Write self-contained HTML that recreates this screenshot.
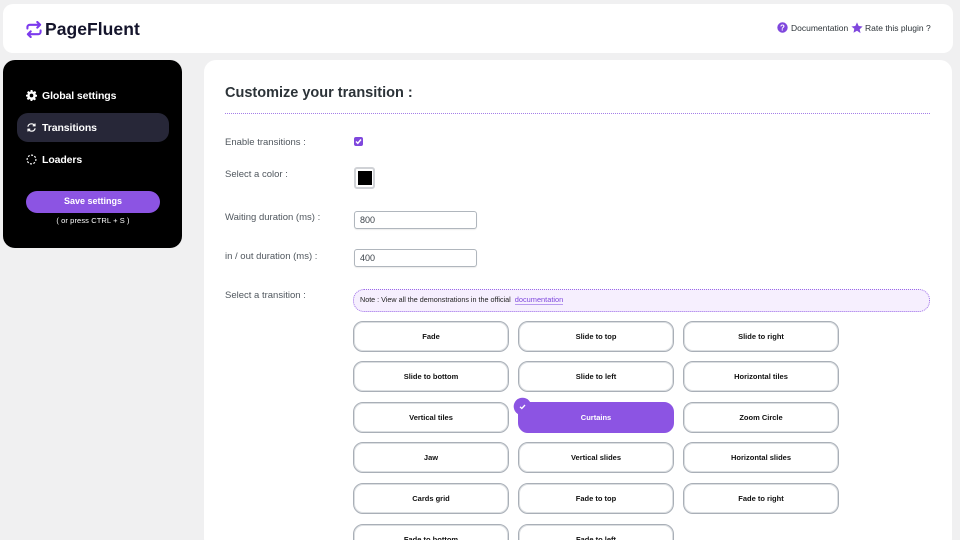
<!DOCTYPE html>
<html lang="en">
<head>
<meta charset="utf-8">
<title>PageFluent</title>
<style>
html,body{margin:0;padding:0;width:960px;height:540px;overflow:hidden;background:#f0f0f1;font-family:"Liberation Sans",sans-serif;color:#3c434a}
#wrap{position:relative;width:960px;height:540px;overflow:hidden}
.a{position:absolute;white-space:nowrap}
#top{position:absolute;left:3px;top:4px;width:950px;height:49px;background:#fff;border-radius:10px}
#side{position:absolute;left:3px;top:60px;width:179px;height:188px;background:#000;border-radius:12px}
#main{position:absolute;left:204px;top:60px;width:748px;height:490px;background:#fff;border-radius:12px}
.lbl{font-size:9.5px;color:#50575e;letter-spacing:0;left:225px;line-height:12px}
.nav{font-size:10.5px;font-weight:bold;color:#fff;left:42px;line-height:12px;letter-spacing:-.1px}
.inp{position:absolute;left:354px;width:116px;height:16px;border:1px solid #b0b6bd;border-radius:3px;background:#fff;font-size:9px;line-height:16px;padding-left:5px;color:#3c434a;box-shadow:0 1px 1px rgba(0,0,0,.08)}
.b{position:absolute;width:154px;height:29px;border:1px solid #a9afb7;border-radius:10px;background:#fff;color:#111;font-size:7.5px;font-weight:bold;text-align:center;line-height:29px;box-shadow:inset 0 0 0 1px #dcdfe2}
.b.s{background:#8c54e3;border-color:#8c54e3;color:#fff;box-shadow:none}
</style>
</head>
<body>
<div id="wrap">
<div id="top"></div>
<svg class="a" style="left:26px;top:21px" width="16" height="17" viewBox="0 0 17 18" fill="none" stroke="#7c3aed" stroke-width="2.200" stroke-linecap="round" stroke-linejoin="round">
<path d="M1.500 8V6.500C1.500 5 2.500 4 4 4H15M12 1l3 3-3 3"/>
<path d="M15.500 10v1.500C15.500 13 14.500 14 13 14H2M5 11l-3 3 3 3"/>
</svg>
<div class="a" style="left:45px;top:19px;font-size:17.500px;font-weight:bold;color:#14142b;line-height:20px;letter-spacing:.05px">PageFluent</div>

<svg class="a" style="left:777px;top:22px" width="11" height="11" viewBox="0 0 11 11"><circle cx="5.500" cy="5.500" r="5.200" fill="#7f47dd"/><text x="5.500" y="8.300" font-size="8" font-weight="bold" text-anchor="middle" fill="#fff" font-family="Liberation Sans">?</text></svg>
<div class="a" style="left:791px;top:22px;font-size:8.500px;line-height:12px;color:#2c3338">Documentation</div>
<svg class="a" style="left:851px;top:22px" width="12" height="12" viewBox="0 0 12 12"><path d="M6 .4l1.700 3.600 3.900.5-2.900 2.700.8 3.900L6 8.700l-3.500 2 .8-3.900L.4 4.500l3.900-.5z" fill="#7f47dd"/></svg>
<div class="a" style="left:865px;top:22px;font-size:8.500px;line-height:12px;color:#2c3338">Rate this plugin ?</div>

<div id="side"></div>
<div class="a" style="left:17px;top:113px;width:152px;height:29px;border-radius:11px;background:#272738"></div>
<svg class="a" style="left:26px;top:90px" width="11" height="11" viewBox="0 0 24 24"><path fill="#fff" fill-rule="evenodd" d="M10 0h4l.6 3.200 2.200.9L19.500 2.300l2.800 2.800-1.800 2.700.9 2.200L24 10.600v3.800l-3.200.6-.9 2.200 1.800 2.700-2.800 2.800-2.700-1.800-2.200.9L14 24h-4l-.6-3.200-2.200-.9-2.700 1.800-2.800-2.800 1.800-2.700-.9-2.200L0 14.400v-3.800l3.200-.6.9-2.200L2.300 5.100l2.800-2.800 2.700 1.800 2.200-.9zM12 8a4 4 0 100 8 4 4 0 000-8z"/></svg>
<div class="a nav" style="top:90px">Global settings</div>
<svg class="a" style="left:27px;top:123px" width="9" height="9" viewBox="0 0 11 11" fill="none" stroke="#fff" stroke-width="1.400"><path d="M1 4.500C1.500 2.500 3.200 1 5.500 1c1.500 0 2.700.7 3.500 1.700M9.800 .6v2.800H7"/><path d="M10 6.500C9.500 8.500 7.800 10 5.500 10 4 10 2.800 9.300 2 8.300M1.200 10.400V7.600H4"/></svg>
<div class="a nav" style="top:122px">Transitions</div>
<svg class="a" style="left:26px;top:154px" width="11" height="11" viewBox="0 0 11 11" fill="none" stroke="#fff" stroke-width="1.200" stroke-linecap="round" stroke-dasharray="1 2.450"><circle cx="5.500" cy="5.500" r="4.400"/></svg>
<div class="a nav" style="top:154px">Loaders</div>
<div class="a" style="left:26px;top:191px;width:134px;height:22px;border-radius:11px;background:#8c54e3;color:#fff;font-size:9px;font-weight:bold;text-align:center;line-height:21px">Save settings</div>
<div class="a" style="left:26px;top:215px;width:134px;text-align:center;color:#fff;font-size:7.500px;line-height:11px;letter-spacing:.1px">( or press CTRL + S )</div>

<div id="main"></div>
<div class="a" style="left:225px;top:85px;font-size:14.500px;font-weight:bold;color:#2c3338;line-height:17px;letter-spacing:0">Customize your transition :</div>
<div class="a" style="left:225px;top:113px;width:705px;height:1px;background:repeating-linear-gradient(90deg,#a57ee8 0,#a57ee8 1px,#fff 1px,#fff 2px)"></div>

<div class="a lbl" style="top:137px">Enable transitions :</div>
<div class="a" style="left:354px;top:137px;width:9px;height:9px;border-radius:2px;background:#7f47dd"></div>
<svg class="a" style="left:354px;top:137px" width="9" height="9" viewBox="0 0 9 9" fill="none" stroke="#fff" stroke-width="1.500"><path d="M2 4.500l1.800 1.800L7 2.500"/></svg>

<div class="a lbl" style="top:169px">Select a color :</div>
<div class="a" style="left:354px;top:167px;width:17px;height:18px;border:2px solid #d0d2d6;border-radius:3px;background:#fff"></div>
<div class="a" style="left:358px;top:171px;width:14px;height:14px;background:#000"></div>

<div class="a lbl" style="top:212px">Waiting duration (ms) :</div>
<div class="inp" style="top:211px">800</div>
<div class="a lbl" style="top:251px">in / out duration (ms) :</div>
<div class="inp" style="top:249px">400</div>

<div class="a lbl" style="top:290px">Select a transition :</div>
<div class="a" style="left:353px;top:289px;width:575px;height:21px;background:#f6effe;border:1px dotted #9a6ae8;border-radius:11px"></div>
<div class="a" style="left:360px;top:294px;font-size:7.200px;line-height:12px;color:#222">Note : View all the demonstrations in the official <span style="color:#7f47dd;border-bottom:1px solid #b79aee;margin-left:2px;font-size:7.400px">documentation</span></div>

<div class="b" style="left:353px;top:321px">Fade</div>
<div class="b" style="left:518px;top:321px">Slide to top</div>
<div class="b" style="left:683px;top:321px">Slide to right</div>
<div class="b" style="left:353px;top:361px">Slide to bottom</div>
<div class="b" style="left:518px;top:361px">Slide to left</div>
<div class="b" style="left:683px;top:361px">Horizontal tiles</div>
<div class="b" style="left:353px;top:402px">Vertical tiles</div>
<div class="b s" style="left:518px;top:402px">Curtains</div>
<div class="b" style="left:683px;top:402px">Zoom Circle</div>
<div class="b" style="left:353px;top:442px">Jaw</div>
<div class="b" style="left:518px;top:442px">Vertical slides</div>
<div class="b" style="left:683px;top:442px">Horizontal slides</div>
<div class="b" style="left:353px;top:483px">Cards grid</div>
<div class="b" style="left:518px;top:483px">Fade to top</div>
<div class="b" style="left:683px;top:483px">Fade to right</div>
<div class="b" style="left:353px;top:524px">Fade to bottom</div>
<div class="b" style="left:518px;top:524px">Fade to left</div>

<svg class="a" style="left:513px;top:397px" width="19" height="19" viewBox="0 0 19 19"><circle cx="9.500" cy="9.500" r="8.800" fill="#8c54e3"/><path d="M7 9.800l1.800 1.700L12 8" fill="none" stroke="#fff" stroke-width="1.300"/></svg>
</div>
</body>
</html>
